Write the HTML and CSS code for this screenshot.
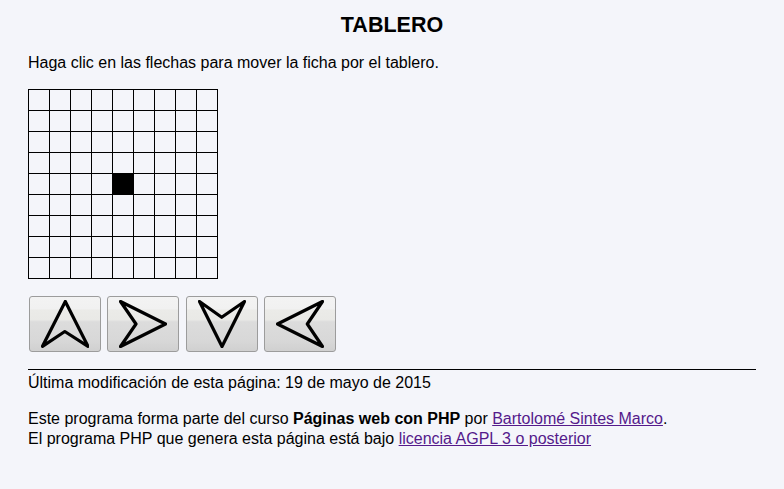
FILE: index.html
```html
<!DOCTYPE html>
<html lang="es">
<head>
<meta charset="utf-8">
<title>Tablero</title>
<link rel="stylesheet" href="styles.css">
</head>
<body>
<h1 class="title">TABLERO</h1>
<p class="intro">Haga clic en las flechas para mover la ficha por el tablero.</p>
<div class="board">
  <div class="cell"></div><div class="cell"></div><div class="cell"></div><div class="cell"></div><div class="cell"></div><div class="cell"></div><div class="cell"></div><div class="cell"></div><div class="cell"></div>
  <div class="cell"></div><div class="cell"></div><div class="cell"></div><div class="cell"></div><div class="cell"></div><div class="cell"></div><div class="cell"></div><div class="cell"></div><div class="cell"></div>
  <div class="cell"></div><div class="cell"></div><div class="cell"></div><div class="cell"></div><div class="cell"></div><div class="cell"></div><div class="cell"></div><div class="cell"></div><div class="cell"></div>
  <div class="cell"></div><div class="cell"></div><div class="cell"></div><div class="cell"></div><div class="cell"></div><div class="cell"></div><div class="cell"></div><div class="cell"></div><div class="cell"></div>
  <div class="cell"></div><div class="cell"></div><div class="cell"></div><div class="cell"></div><div class="cell piece"></div><div class="cell"></div><div class="cell"></div><div class="cell"></div><div class="cell"></div>
  <div class="cell"></div><div class="cell"></div><div class="cell"></div><div class="cell"></div><div class="cell"></div><div class="cell"></div><div class="cell"></div><div class="cell"></div><div class="cell"></div>
  <div class="cell"></div><div class="cell"></div><div class="cell"></div><div class="cell"></div><div class="cell"></div><div class="cell"></div><div class="cell"></div><div class="cell"></div><div class="cell"></div>
  <div class="cell"></div><div class="cell"></div><div class="cell"></div><div class="cell"></div><div class="cell"></div><div class="cell"></div><div class="cell"></div><div class="cell"></div><div class="cell"></div>
  <div class="cell"></div><div class="cell"></div><div class="cell"></div><div class="cell"></div><div class="cell"></div><div class="cell"></div><div class="cell"></div><div class="cell"></div><div class="cell"></div>
</div>
<div class="controls">
  <button class="arrow-btn" type="button" aria-label="Arriba">
    <svg viewBox="0 0 48 48" width="48" height="48"><polygon points="24.3,1.5 47,46.3 23.8,31.5 1.5,46.3" /></svg>
  </button>
  <button class="arrow-btn" type="button" aria-label="Derecha">
    <svg viewBox="0 0 48 48" width="48" height="48"><polygon points="1.5,1.5 46.5,24 1.5,46.5 17,24" /></svg>
  </button>
  <button class="arrow-btn" type="button" aria-label="Abajo">
    <svg viewBox="0 0 48 48" width="48" height="48"><polygon points="1.5,1.5 23.7,17.3 46.5,1.5 24,46.5" /></svg>
  </button>
  <button class="arrow-btn" type="button" aria-label="Izquierda">
    <svg viewBox="0 0 48 48" width="48" height="48"><polygon points="1.5,24 46.5,1.5 31.3,24 46.5,46.5" /></svg>
  </button>
</div>
<footer class="footer">
  <p class="modified">Última modificación de esta página: 19 de mayo de 2015</p>
  <p class="credits">Este programa forma parte del curso <strong>Páginas web con PHP</strong> por <a href="#">Bartolomé Sintes Marco</a>.<br>
  El programa PHP que genera esta página está bajo <a href="#">licencia AGPL 3 o posterior</a></p>
</footer>
</body>
</html>
```

FILE: styles.css
```css
html {
  background: #f4f5fa;
}

body {
  margin: 0;
  padding: 0 28px;
  font-family: "Liberation Sans", Arial, sans-serif;
  font-size: 16px;
  line-height: 20px;
  color: #000;
  background: #f4f5fa;
}

.title {
  margin: 12px 0 0;
  font-size: 21.5px;
  line-height: 26px;
  font-weight: bold;
  text-align: center;
}

.intro {
  margin: 15px 0 16px;
}

.board {
  display: grid;
  grid-template-columns: repeat(9, 20px);
  grid-auto-rows: 20px;
  gap: 1px;
  padding: 1px;
  width: max-content;
  background: #000;
}

.cell {
  background: #f4f5fa;
}

.cell.piece {
  background: #000;
}

.controls {
  display: flex;
  gap: 6.33px;
  margin: 17px 0 17px 1px;
}

.arrow-btn {
  display: flex;
  align-items: center;
  justify-content: center;
  width: 72px;
  height: 56px;
  padding: 0;
  border: 1px solid #9c9c9c;
  border-radius: 3px;
  background: linear-gradient(#f3f3f3 0%, #f1f1f1 22%, #ebebe8 24%, #e9e9e6 42%, #dcdcdc 46%, #d8d8d8 80%, #d0d0d0 100%);
  cursor: pointer;
}

.arrow-btn svg {
  display: block;
  fill: none;
  stroke: #000;
  stroke-width: 3.2;
  stroke-linejoin: round;
  stroke-linecap: round;
}

.footer {
  border-top: 1px solid #000;
}

.modified {
  margin: 3px 0 16px;
}

.credits {
  margin: 0;
}

.credits a {
  color: #551a8b;
}
```
